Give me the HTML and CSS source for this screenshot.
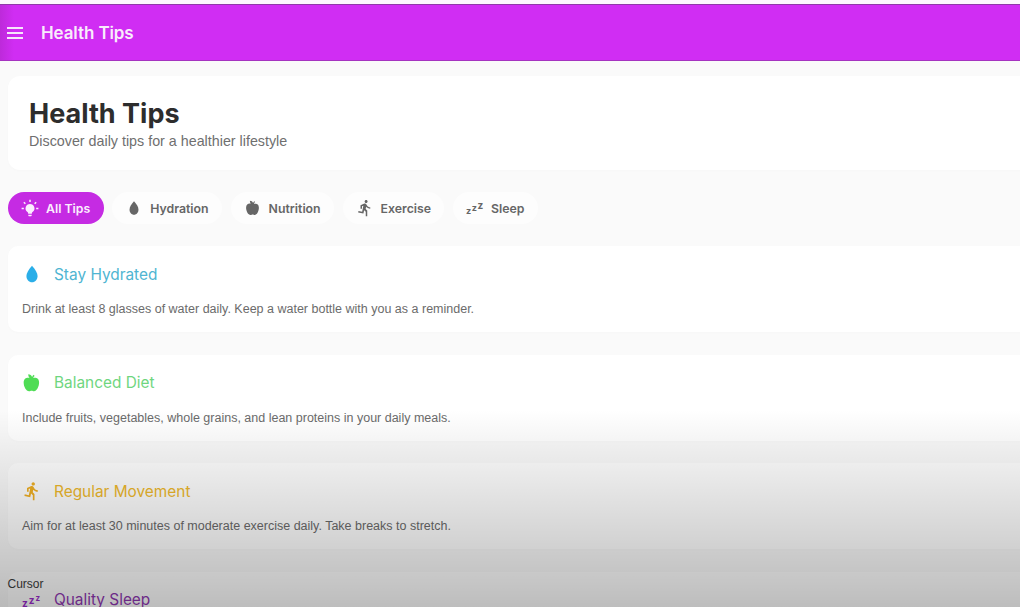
FILE: index.html
```html
<!DOCTYPE html>
<html lang="en">
<head>
<meta charset="utf-8">
<title>Health Tips</title>
<link rel="stylesheet" href="styles.css">
</head>
<body>
<div class="strip"></div>
<header class="appbar">
  <svg class="menu" viewBox="0 0 16 12"><path d="M0 1h16M0 6h16M0 11h16"/></svg>
  <span class="appbar-title">Health Tips</span>
</header>
<main class="content">
  <section class="hero">
    <h1>Health Tips</h1>
    <p>Discover daily tips for a healthier lifestyle</p>
  </section>
  <nav class="chips">
    <a class="chip active">
      <svg class="chip-icon" viewBox="0 0 24 24"><path class="fill" d="M12 6.500a6 6 0 0 0-3.400 10.900c.6.500.9 1 .9 1.600v.5h5v-.5c0-.6.3-1.100.9-1.600A6 6 0 0 0 12 6.500zM9.700 21h4.600v.7c0 .8-.7 1.300-1.300 1.300h-2c-.7 0-1.300-.5-1.300-1.300z"/><path class="ray" d="M12 1v3M3.800 4.300l2 2M20.200 4.300l-2 2M.8 12.500h3M20.200 12.500h3"/></svg>
      All Tips
    </a>
    <a class="chip">
      <svg class="chip-icon" viewBox="-1.500 -1.500 27 27"><use href="#drop"/></svg>
      Hydration
    </a>
    <a class="chip">
      <svg class="chip-icon" viewBox="-1 -1 26 26"><use href="#apple"/></svg>
      Nutrition
    </a>
    <a class="chip">
      <svg class="chip-icon" viewBox="0 0 24 24"><use href="#run"/></svg>
      Exercise
    </a>
    <a class="chip">
      <span class="zzz chip-zzz"><i>z</i><i>z</i><i>z</i></span>
      Sleep
    </a>
  </nav>
  <article class="tip">
    <div class="tip-head tone-blue">
      <svg class="tip-icon" viewBox="0 0 24 24"><use href="#drop"/></svg>
      <h2>Stay Hydrated</h2>
    </div>
    <p>Drink at least 8 glasses of water daily. Keep a water bottle with you as a reminder.</p>
  </article>
  <article class="tip">
    <div class="tip-head tone-green">
      <svg class="tip-icon" viewBox="0 0 24 24"><use href="#apple"/></svg>
      <h2>Balanced Diet</h2>
    </div>
    <p>Include fruits, vegetables, whole grains, and lean proteins in your daily meals.</p>
  </article>
  <article class="tip">
    <div class="tip-head tone-amber">
      <svg class="tip-icon" viewBox="0 0 24 24"><use href="#run"/></svg>
      <h2>Regular Movement</h2>
    </div>
    <p>Aim for at least 30 minutes of moderate exercise daily. Take breaks to stretch.</p>
  </article>
  <article class="tip">
    <div class="tip-head tone-purple">
      <span class="zzz tip-zzz"><i>z</i><i>z</i><i>z</i></span>
      <h2>Quality Sleep</h2>
    </div>
  </article>
</main>
<div class="fade"></div>
<div class="cursor-label">Cursor</div>
<svg class="defs" width="0" height="0" aria-hidden="true">
  <defs>
    <path id="drop" d="M12 2C8 6.800 5.300 10.500 5.300 14.500c0 4.300 3 7.500 6.700 7.500s6.700-3.200 6.700-7.500C18.700 10.500 16 6.800 12 2z"/>
    <path id="apple" d="M7.500 1.500c2.300 0 3.900 1 4.600 3.300.3-1.100 1-2 2-2.600l1 1.300c-1 .6-1.600 1.500-1.700 2.600 2-.8 7.100-.9 7.100 5.400 0 5-3 10.500-6 10.500-1.500 0-1.700-.7-3-.7s-1.500.7-3 .7c-3.500 0-6.500-5.500-6.500-10.500 0-5.500 4.500-6.600 7.300-5.500C8.500 5.500 7.500 4 7.500 1.500z"/>
    <path id="run" d="M13.490 5.480c1.100 0 2-.9 2-2s-.9-2-2-2-2 .9-2 2 .9 2 2 2zm-3.600 13.900l1-4.400 2.100 2v6h2v-7.500l-2.100-2 .6-3c1.300 1.500 3.300 2.500 5.500 2.500v-2c-1.900 0-3.500-1-4.300-2.400l-1-1.600c-.4-.6-1-1-1.700-1-.3 0-.5.100-.8.100l-5.200 2.200v4.700h2v-3.400l1.800-.7-1.600 8.100-4.900-1-.4 2 7 1.400z"/>
  </defs>
</svg>
</body>
</html>
```
FILE: styles.css
```css
* { box-sizing: border-box; }
html, body { height: 100%; }
body {
  margin: 0;
  height: 607px;
  overflow: hidden;
  position: relative;
  background: #fafafa;
  font-family: Inter, "Liberation Sans", sans-serif;
  color: #333;
}
.defs { position: absolute; }
.strip { height: 4px; background: #fdf6fe; }
.appbar {
  height: 57px;
  display: flex;
  align-items: center;
  gap: 18px;
  padding: 1px 7px 0;
  background: linear-gradient(90deg, #bd2ada 0, #d02df3 14px);
  border-top: 1px solid #8f38a8;
  border-bottom: 1px solid #a534c0;
}
.menu { width: 16px; height: 12px; fill: none; stroke: #f6e6fb; stroke-width: 2; }
.appbar-title { font-size: 17px; font-weight: 600; color: #f8ecfb; letter-spacing: -.1px; }
.content {
  padding: 15px 0 0 8px;
  margin-right: -16px;
}
.hero {
  height: 94px;
  padding: 21px 21px;
  background: #fff;
  border-radius: 12px 0 0 12px;
  box-shadow: 0 1px 3px rgba(0,0,0,.015);
}
.hero h1 { margin: 0; font-size: 27px; line-height: 34px; font-weight: 700; color: #2d2d2d; }
.hero p { margin: 0; font-family: "Liberation Sans", sans-serif; font-size: 14.300px; line-height: 20px; color: #6f6f6f; }
.chips { display: flex; gap: 9px; margin: 22px 0; }
.chip {
  height: 32px;
  display: flex;
  align-items: center;
  gap: 7px;
  padding: 0 13px;
  border-radius: 16px;
  background: #fdfdfd;
  font-size: 12.300px;
  font-weight: 600;
  color: #666;
}
.chip.active { background: #c52be3; color: #fbeefe; padding-right: 14px; margin-right: -1px; }
.chip-icon { width: 18px; height: 18px; fill: #666; flex: none; }
.active .fill { fill: #fbeefe; }
.ray { fill: none; stroke: #fbeefe; stroke-width: 2; }
.zzz { display: inline-flex; align-items: flex-end; font-weight: 700; line-height: 1; flex: none; }
.zzz i { font-style: normal; }
.chip-zzz { color: #666; width: 18px; height: 14px; }
.chip-zzz i:nth-child(1) { font-size: 9px; }
.chip-zzz i:nth-child(2) { font-size: 9px; margin: 0 0 3px .5px; }
.chip-zzz i:nth-child(3) { font-size: 10px; margin: 0 0 5px .5px; }
.tip {
  height: 86px;
  margin-bottom: 22.500px;
  padding: 14px;
  background: #fff;
  border-radius: 10px 0 0 10px;
  box-shadow: 0 1px 3px rgba(0,0,0,.015);
}
.tip-head { display: flex; align-items: center; gap: 12px; height: 28px; }
.tip-head h2 { margin: 0; font-size: 15.400px; font-weight: 400; }
.tip-icon { width: 20px; height: 20px; flex: none; }
.tip p { margin: 12px 0 0; font-family: "Liberation Sans", sans-serif; font-size: 12.500px; line-height: 18px; color: #6b6b6b; }
.tone-blue h2 { color: #4fb5d2; }
.tone-blue .tip-icon { fill: #2aaee8; }
.tone-green h2 { color: #6fd67f; }
.tone-green .tip-icon { fill: #4fdc55; }
.tone-amber h2 { color: #f0b92c; }
.tone-amber .tip-icon { fill: #f0b024; }
.tone-purple h2 { color: #9038b3; }
.tip-zzz { width: 20px; height: 16px; color: #9a2ccc; }
.tip-zzz i:nth-child(1) { font-size: 10px; }
.tip-zzz i:nth-child(2) { font-size: 10px; margin: 0 0 3px 1px; }
.tip-zzz i:nth-child(3) { font-size: 8px; margin: 0 0 6px 1px; }
.fade {
  position: absolute;
  left: 0; right: 0; top: 410px; bottom: 0;
  background: linear-gradient(180deg, rgba(0,0,0,0), rgba(0,0,0,.26));
  pointer-events: none;
}
.cursor-label {
  position: absolute;
  left: 7.500px;
  top: 577px;
  font-family: "Liberation Sans", sans-serif;
  font-size: 12px;
  line-height: 14px;
  color: #2e2e2e;
}
```
